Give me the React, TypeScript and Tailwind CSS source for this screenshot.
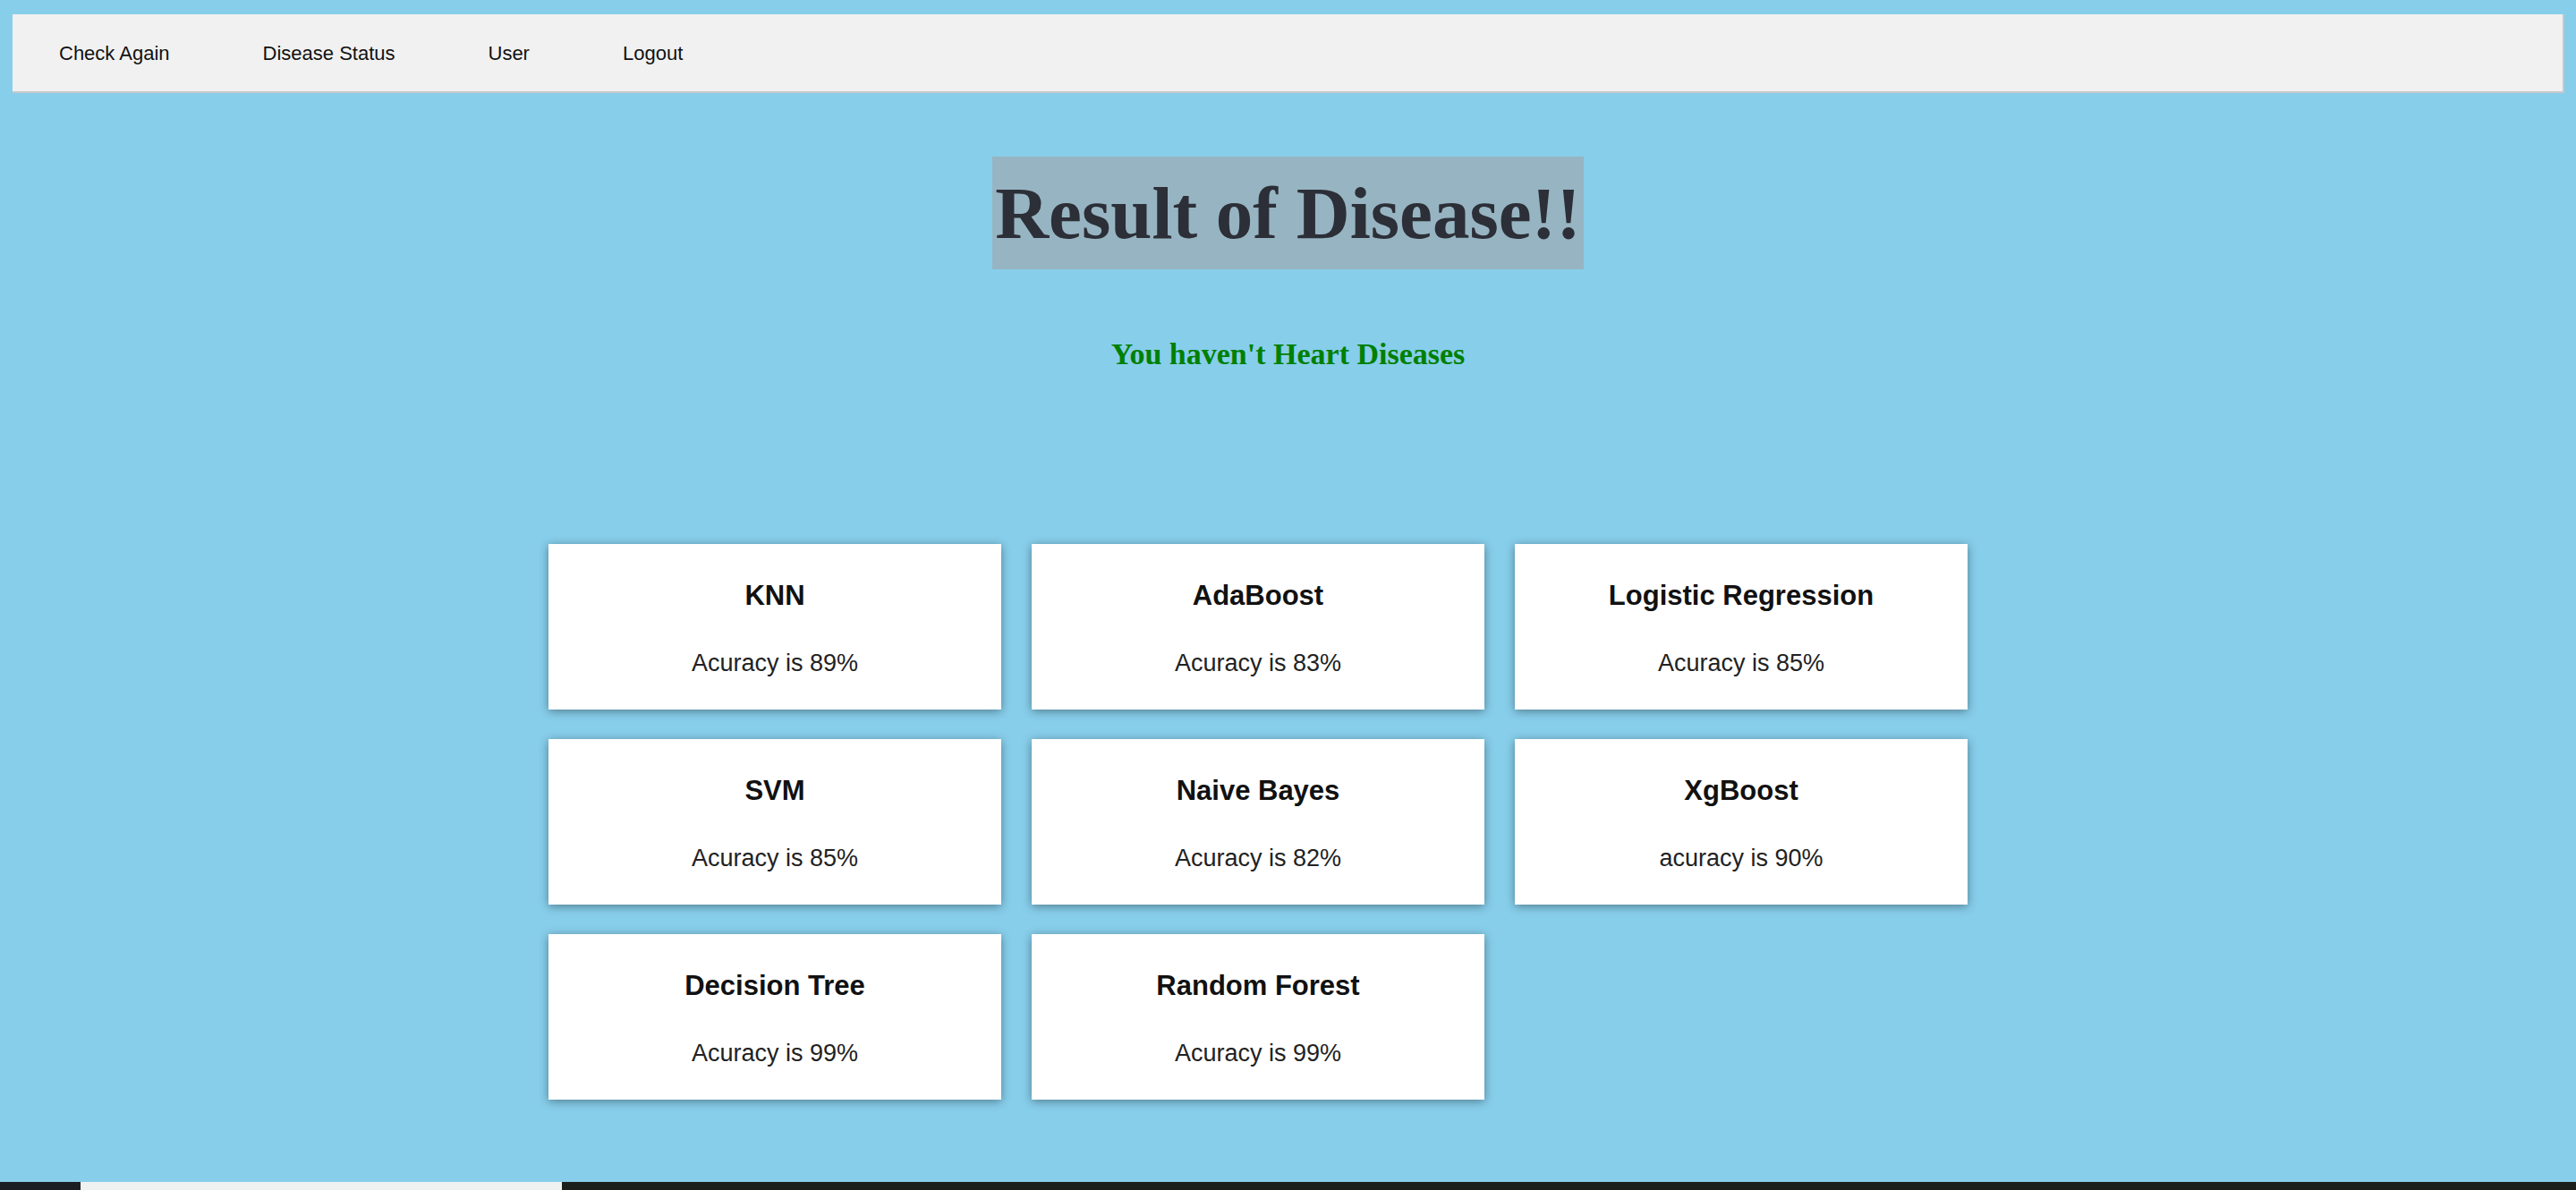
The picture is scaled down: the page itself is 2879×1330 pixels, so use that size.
const navLinks = ["Check Again", "Disease Status", "User", "Logout"];

const models = [
	{ name: "KNN", acc: "Acuracy is 89%" },
	{ name: "AdaBoost", acc: "Acuracy is 83%" },
	{ name: "Logistic Regression", acc: "Acuracy is 85%" },
	{ name: "SVM", acc: "Acuracy is 85%" },
	{ name: "Naive Bayes", acc: "Acuracy is 82%" },
	{ name: "XgBoost", acc: "acuracy is 90%" },
	{ name: "Decision Tree", acc: "Acuracy is 99%" },
	{ name: "Random Forest", acc: "Acuracy is 99%" },
];

const ModelCard = ({ name, acc }: { name: string; acc: string }) => {
	return (
		<div className="h-[185px] bg-white shadow-[0_2px_10px_rgba(0,0,0,0.4)] pt-[40px] text-center">
			<h3 className="text-[31px] leading-[36px] font-bold text-[#111]">{name}</h3>
			<p className="mt-[41px] text-[27px] leading-[32px] text-[#222]">{acc}</p>
		</div>
	);
};

const App = () => {
	return (
		<div className="min-h-[1330px] bg-[#87ceeb] flex flex-col font-['Liberation_Sans',Arial,sans-serif]">
			<div className="pt-4 pl-[14px] pr-[13px]">
				<nav className="h-[88px] bg-[#f1f1f1] border-b-2 border-r-2 border-[#c6c8ca] flex items-center">
					{navLinks.map((link) => (
						<a key={link} href="#" className="px-[52px] text-[22px] text-[#111]">
							{link}
						</a>
					))}
				</nav>
			</div>

			<div className="flex justify-center mt-[71px]">
				<h1 className="h-[126px] leading-[126px] px-[3px] bg-[#97b4c2] text-[83px] font-bold text-[#2c2f37] font-['Liberation_Serif','Times_New_Roman',serif]">
					Result of Disease!!
				</h1>
			</div>

			<p className="mt-[75px] text-center text-[34px] leading-[40px] font-bold text-[#008000] font-['Liberation_Serif','Times_New_Roman',serif]">
				You haven't Heart Diseases
			</p>

			<div className="mt-[192px] ml-[613px] grid grid-cols-[506px_506px_506px] gap-x-[34px] gap-y-[33px]">
				{models.map((m) => (
					<ModelCard key={m.name} name={m.name} acc={m.acc} />
				))}
			</div>

			<div className="mt-auto h-[9px] flex">
				<div className="w-[90px] bg-[#1b1f24]" />
				<div className="w-[538px] bg-[#f0f1f1]" />
				<div className="flex-1 bg-[#1c201c]" />
			</div>
		</div>
	);
};

export default App;
